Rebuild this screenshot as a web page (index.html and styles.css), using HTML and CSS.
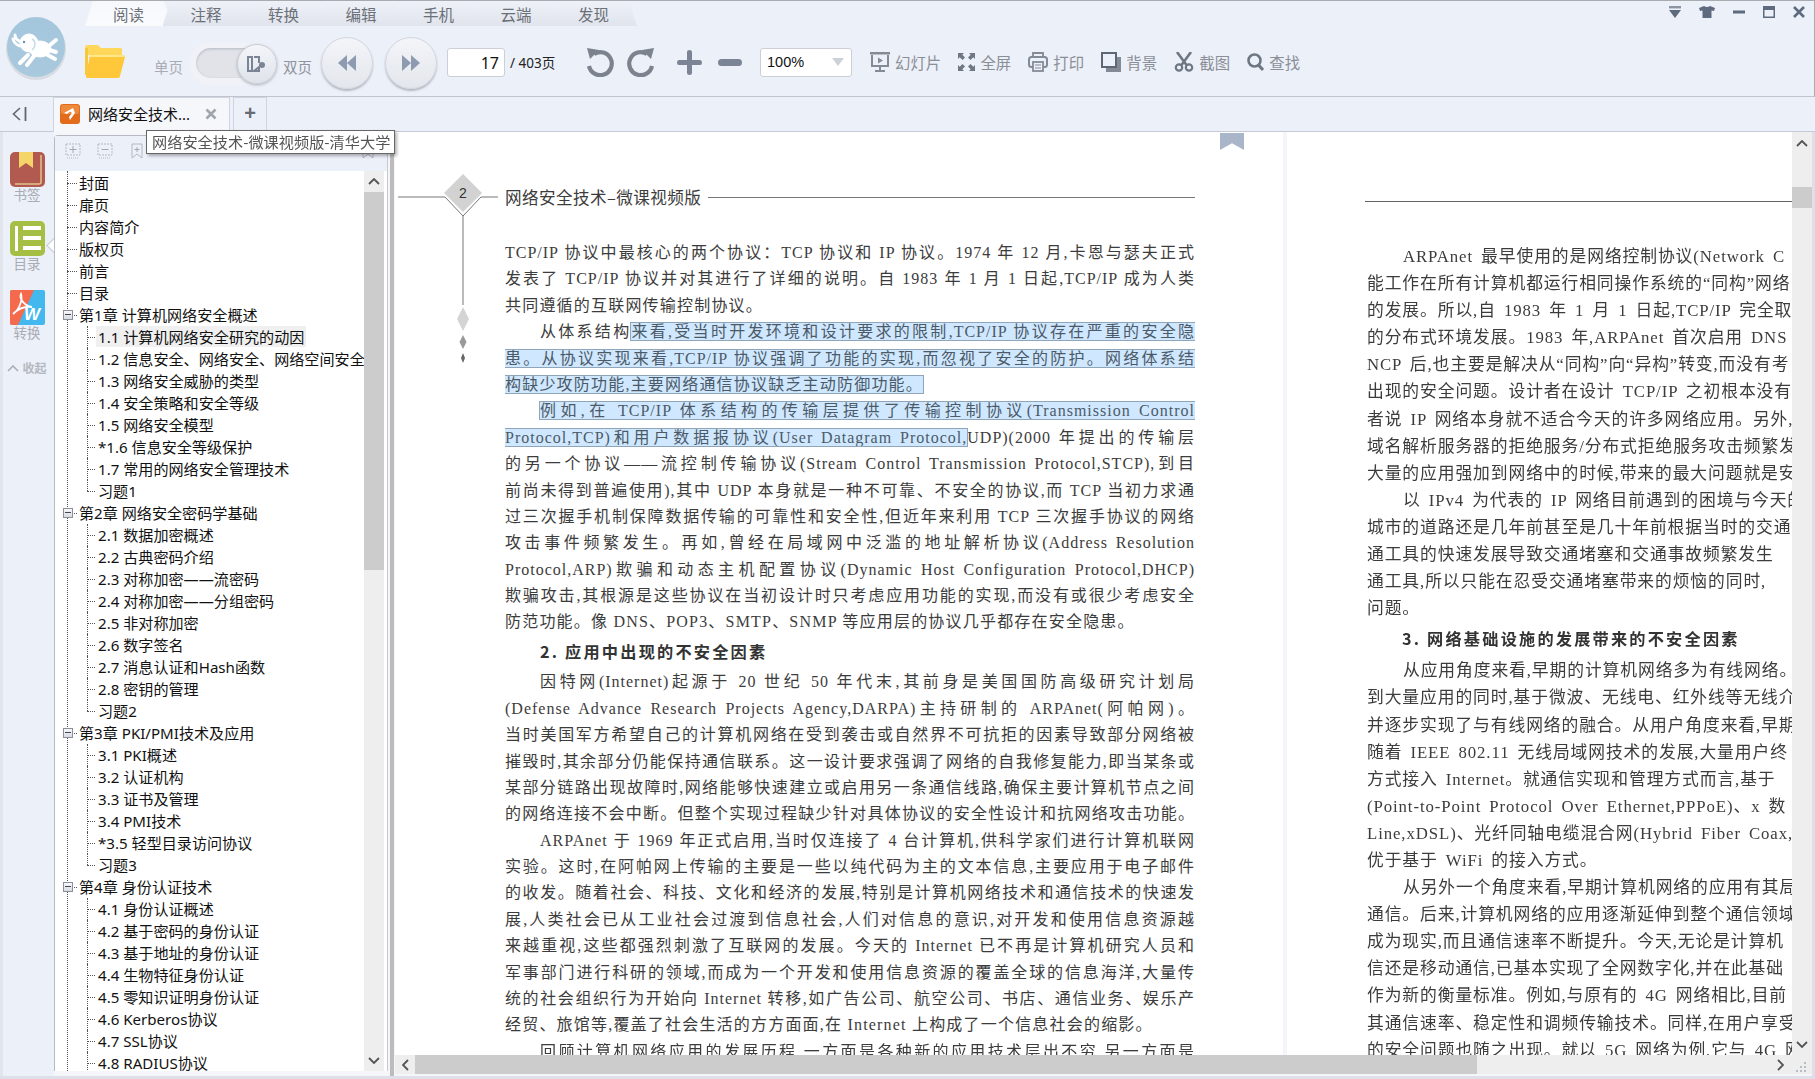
FILE: index.html
```html
<!DOCTYPE html>
<html lang="zh-CN">
<head>
<meta charset="utf-8">
<title>网络安全技术-微课视频版-清华大学</title>
<link rel="stylesheet" href="styles.css">
</head>
<body>
<div class="app">
  <header class="head">
    <div class="logo-col">
      <svg class="logo" viewBox="0 0 60 64">
        <defs><linearGradient id="lg" x1="0" y1="0" x2="0" y2="1"><stop offset="0" stop-color="#a4c6dc"/><stop offset="1" stop-color="#a9c9dd"/></linearGradient></defs>
        <ellipse cx="30" cy="32" rx="30" ry="31" fill="#c9ced6" opacity=".6"/>
        <ellipse cx="30" cy="30" rx="29" ry="30" fill="url(#lg)"/>
        <g fill="#fff" stroke="#fff" stroke-linecap="round" stroke-linejoin="round">
          <ellipse cx="34" cy="32" rx="11" ry="8"/>
          <ellipse cx="23" cy="26" rx="9" ry="9"/>
          <path d="M16 25C12 24 9 22 9 18M14 29C11 28 8 26 7 22" stroke-width="3" fill="none"/>
          <path d="M22 38L14 46M28 39L21 48M40 37L49 42M43 33L50 35M44 28L50 23" stroke-width="4" fill="none"/>
        </g>
        <circle cx="18" cy="25" r="1.2" fill="#6b8ea6"/>
        <path d="M26 22C30 24 30 30 26 33" stroke="#c7dbe8" stroke-width="1.4" fill="none"/>
      </svg>
    </div>
    <div class="head-main">
      <div class="tabs-row">
        <nav class="tabs">
          <a class="tab active">阅读</a><a class="tab">注释</a><a class="tab">转换</a><a class="tab">编辑</a><a class="tab">手机</a><a class="tab">云端</a><a class="tab">发现</a>
        </nav>
        <div class="win-ctrls">
          <svg class="wc wc-a" viewBox="0 0 12 12"><rect width="12" height="2.4" fill="#8d94a3"/><path d="M0 4H12L6 12Z" fill="#5e6a7e"/></svg>
          <svg class="wc wc-b" viewBox="0 0 16 12"><path d="M0 2L5 0Q8 2 11 0L16 2L15 5L12.500 4.500V12H3.500V4.500L1 5Z" fill="#5e6a7e"/></svg>
          <svg class="wc wc-c" viewBox="0 0 12 12"><rect y="4.500" width="12" height="3" fill="#5e6a7e"/></svg>
          <svg class="wc wc-c" viewBox="0 0 12 12"><rect width="12" height="12" fill="#5e6a7e"/><rect x="1.500" y="4" width="9" height="6.500" fill="#ecf0f8"/></svg>
          <svg class="wc wc-c" viewBox="0 0 12 12"><path d="M1 1L11 11M11 1L1 11" stroke="#5e6a7e" stroke-width="2.600"/></svg>
        </div>
      </div>
      <div class="toolbar">
        <svg class="folder" viewBox="0 0 40 33"><path d="M0 3Q0 0 3 0H13L16 3H36Q37 3 37 5V10H0Z" fill="#ffd75a"/><path d="M0 3H3V30H0Z" fill="#f8c83c"/><path d="M5 10H38Q40 10 40 12L35 31Q35 33 33 33H2Q1 33 1 31Z" fill="#ffc73a"/><path d="M5 10H38Q40 10 39.500 12H4.500Z" fill="#ffe88a"/></svg>
        <span class="lbl lbl-single">单页</span>
        <div class="toggle"><div class="toggle-track"></div>
          <div class="knob"><svg viewBox="0 0 20 18"><path d="M1 2H5V16H1ZM7 2H12V8M12 12V16H7Z" fill="none" stroke="#7b8494" stroke-width="2"/><circle cx="15" cy="10" r="3" fill="#7b8494"/></svg></div>
        </div>
        <span class="lbl lbl-double">双页</span>
        <button class="round-btn rb-prev"><svg viewBox="0 0 20 18"><path d="M10 1V17L1 9ZM19 1V17L10 9Z" fill="#8d9ab0"/></svg></button>
        <button class="round-btn rb-next"><svg viewBox="0 0 20 18"><path d="M1 1V17L10 9ZM10 1V17L19 9Z" fill="#8d9ab0"/></svg></button>
        <div class="page-input">17</div>
        <span class="page-total">/ 403页</span>
        <svg class="rot rot-undo" viewBox="0 0 30 30"><path d="M9 7A11.500 11.500 0 1 1 4 19" fill="none" stroke="#7c838e" stroke-width="4.200"/><path d="M2 1L14 3L5 12Z" fill="#7c838e"/></svg>
        <svg class="rot rot-redo" viewBox="0 0 30 30"><path d="M21 7A11.500 11.500 0 1 0 26 19" fill="none" stroke="#7c838e" stroke-width="4.200"/><path d="M28 1L16 3L25 12Z" fill="#7c838e"/></svg>
        <svg class="zoom-plus" viewBox="0 0 25 25"><path d="M10 2Q10 0 12.500 0T15 2V10H23Q25 10 25 12.500T23 15H15V23Q15 25 12.500 25T10 23V15H2Q0 15 0 12.500T2 10H10Z" fill="#7a8494"/></svg>
        <div class="zoom-minus"></div>
        <div class="zoom-select"><span>100%</span><i class="caret"></i></div>
        <div class="tools">
          <div class="tool"><svg class="ti" viewBox="0 0 20 20"><rect width="20" height="2.500" fill="#848a96"/><path d="M2 3V14H18V3" fill="none" stroke="#848a96" stroke-width="2"/><path d="M8 5.500L13 8.500L8 11.500Z" fill="#848a96"/><rect x="9" y="14" width="2" height="4" fill="#848a96"/><rect x="5" y="18" width="10" height="2" fill="#848a96"/></svg><span>幻灯片</span></div>
          <div class="tool"><svg class="ti ti-s" viewBox="0 0 17 18"><path d="M0 0H6L4.300 1.700L7 4.500L4.500 7L1.700 4.300L0 6ZM17 0V6L15.300 4.300L12.500 7L10 4.500L12.700 1.700L11 0ZM0 18V12L1.700 13.700L4.500 11L7 13.500L4.300 16.300L6 18ZM17 18H11L12.700 16.300L10 13.500L12.500 11L15.300 13.700L17 12Z" fill="#6f7684"/></svg><span>全屏</span></div>
          <div class="tool"><svg class="ti" viewBox="0 0 20 20"><path d="M5 5V1H15V5" fill="none" stroke="#848a96" stroke-width="1.800"/><rect x="1" y="5" width="18" height="10" rx="2.500" fill="none" stroke="#848a96" stroke-width="2"/><rect x="5" y="10" width="10" height="9" fill="#ecf0f8" stroke="#848a96" stroke-width="1.800"/><path d="M7 13H13M7 16H13" stroke="#848a96" stroke-width="1.200"/></svg><span>打印</span></div>
          <div class="tool"><svg class="ti" viewBox="0 0 20 20"><rect x="5" y="5" width="15" height="15" fill="#848a96"/><rect x="1" y="1" width="14" height="14" fill="#ecf0f8" stroke="#5f6674" stroke-width="2"/></svg><span>背景</span></div>
          <div class="tool"><svg class="ti" viewBox="0 0 20 20"><path d="M3 0L12.500 13M17 0L7.500 13" stroke="#6f7684" stroke-width="2.600"/><circle cx="5" cy="15.500" r="3.200" fill="none" stroke="#6f7684" stroke-width="2.200"/><circle cx="15" cy="15.500" r="3.200" fill="none" stroke="#6f7684" stroke-width="2.200"/></svg><span>截图</span></div>
          <div class="tool"><svg class="ti ti-s" viewBox="0 0 17 18"><circle cx="7.500" cy="7.500" r="6" fill="none" stroke="#6f7684" stroke-width="2.600"/><path d="M11.500 12L16 17" stroke="#6f7684" stroke-width="3"/></svg><span>查找</span></div>
        </div>
      </div>
    </div>
  </header>

  <div class="tabbar">
    <svg class="collapse" viewBox="0 0 15 14"><path d="M8 1L1.500 7L8 13" fill="none" stroke="#5e6673" stroke-width="1.600"/><path d="M13.500 0V14" stroke="#5e6673" stroke-width="1.800"/></svg>
    <div class="doc-tab">
      <svg class="doc-ico" viewBox="0 0 20 20"><rect width="20" height="20" rx="3" fill="#e36c1c"/><rect x="1" y="1" width="18" height="9" rx="2" fill="#ee8a3c"/><path d="M4 9L13 4L15 9L10 16L9 13L12 9L10 7.500L7 10Z" fill="#fff"/></svg>
      <span class="doc-name">网络安全技术...</span>
      <svg class="doc-x" viewBox="0 0 12 12"><path d="M1.500 1.500L10.500 10.500M10.500 1.500L1.500 10.500" stroke="#a0a4ac" stroke-width="2.600"/></svg>
    </div>
    <div class="tab-add">+</div>
    <div class="tooltip">网络安全技术-微课视频版-清华大学</div>
  </div>

  <main class="main">
    <aside class="rail">
      <div class="rail-item">
        <svg class="rail-ico" viewBox="0 0 35 35"><rect width="35" height="35" rx="5" fill="#b35a50"/><path d="M31 3V30Q31 32 29 32H5" fill="none" stroke="#e4c18c" stroke-width="1.500"/><path d="M9 0H23V16L16 11L9 16Z" fill="#f5d46a"/></svg>
        <span>书签</span>
      </div>
      <div class="rail-item current">
        <svg class="rail-ico" viewBox="0 0 35 35"><rect width="35" height="35" rx="5" fill="#a5bf45"/><path d="M5 5H8V30H5ZM13 5H31V9H13ZM13 15H31V19H13ZM13 25H31V29H13Z" fill="#fff"/></svg>
        <span>目录</span>
      </div>
      <div class="rail-item">
        <svg class="rail-ico" viewBox="0 0 35 35"><rect width="35" height="35" rx="2" fill="#43b8ee"/><path d="M0 2Q0 0 2 0H24L8 35H2Q0 35 0 33Z" fill="#f56a4c"/><path d="M3 24C9 20 13 10 11 4C9 8 14 16 22 17C15 16 8 19 3 24Z" fill="none" stroke="#fff" stroke-width="1.800"/><text class="rail-w" x="22" y="30">W</text></svg>
        <span>转换</span>
      </div>
      <div class="rail-fold"><svg viewBox="0 0 12 7"><path d="M1 6L6 1L11 6" fill="none" stroke="#a8acb4" stroke-width="1.500"/></svg><span>收起</span></div>
    </aside>

    <section class="panel">
      <div class="panel-tools">
        <svg class="pt" viewBox="0 0 16 16"><rect x="1" y="1" width="14" height="11" fill="none" stroke="#b4b8c2" stroke-dasharray="2 1"/><path d="M8 3V10M4.500 6.500H11.500" stroke="#a4a8b2"/><path d="M2 15H14" stroke="#b4b8c2" stroke-dasharray="1 1"/></svg>
        <svg class="pt" viewBox="0 0 16 16"><rect x="1" y="1" width="14" height="11" fill="none" stroke="#b4b8c2" stroke-dasharray="2 1"/><path d="M4.500 6.500H11.500" stroke="#a4a8b2"/><path d="M2 15H14" stroke="#b4b8c2" stroke-dasharray="1 1"/></svg>
        <svg class="pt" viewBox="0 0 16 16"><path d="M3 1H13V15L8 11L3 15Z" fill="none" stroke="#b4b8c2"/><path d="M8 4V9M5.500 6.500H10.500" stroke="#a4a8b2"/></svg>
        <span class="pt-spacer"></span>
        <svg class="pt pt-end" viewBox="0 0 16 16"><path d="M3 1H13V15L8 11L3 15Z" fill="none" stroke="#b4b8c2"/></svg>
      </div>
      <div class="panel-body">
        <ul class="tree">
          <li class="top"><span>封面</span></li>
          <li class="top"><span>扉页</span></li>
          <li class="top"><span>内容简介</span></li>
          <li class="top"><span>版权页</span></li>
          <li class="top"><span>前言</span></li>
          <li class="top"><span>目录</span></li>
          <li class="top chap"><i class="expander"></i><span>第1章 计算机网络安全概述</span></li>
          <li class="sub sel"><span>1.1 计算机网络安全研究的动因</span></li>
          <li class="sub"><span>1.2 信息安全、网络安全、网络空间安全</span></li>
          <li class="sub"><span>1.3 网络安全威胁的类型</span></li>
          <li class="sub"><span>1.4 安全策略和安全等级</span></li>
          <li class="sub"><span>1.5 网络安全模型</span></li>
          <li class="sub"><span>*1.6 信息安全等级保护</span></li>
          <li class="sub"><span>1.7 常用的网络安全管理技术</span></li>
          <li class="sub last"><span>习题1</span></li>
          <li class="top chap"><i class="expander"></i><span>第2章 网络安全密码学基础</span></li>
          <li class="sub"><span>2.1 数据加密概述</span></li>
          <li class="sub"><span>2.2 古典密码介绍</span></li>
          <li class="sub"><span>2.3 对称加密——流密码</span></li>
          <li class="sub"><span>2.4 对称加密——分组密码</span></li>
          <li class="sub"><span>2.5 非对称加密</span></li>
          <li class="sub"><span>2.6 数字签名</span></li>
          <li class="sub"><span>2.7 消息认证和Hash函数</span></li>
          <li class="sub"><span>2.8 密钥的管理</span></li>
          <li class="sub last"><span>习题2</span></li>
          <li class="top chap"><i class="expander"></i><span>第3章 PKI/PMI技术及应用</span></li>
          <li class="sub"><span>3.1 PKI概述</span></li>
          <li class="sub"><span>3.2 认证机构</span></li>
          <li class="sub"><span>3.3 证书及管理</span></li>
          <li class="sub"><span>3.4 PMI技术</span></li>
          <li class="sub"><span>*3.5 轻型目录访问协议</span></li>
          <li class="sub last"><span>习题3</span></li>
          <li class="top chap"><i class="expander"></i><span>第4章 身份认证技术</span></li>
          <li class="sub"><span>4.1 身份认证概述</span></li>
          <li class="sub"><span>4.2 基于密码的身份认证</span></li>
          <li class="sub"><span>4.3 基于地址的身份认证</span></li>
          <li class="sub"><span>4.4 生物特征身份认证</span></li>
          <li class="sub"><span>4.5 零知识证明身份认证</span></li>
          <li class="sub"><span>4.6 Kerberos协议</span></li>
          <li class="sub"><span>4.7 SSL协议</span></li>
          <li class="sub"><span>4.8 RADIUS协议</span></li>
        </ul>
        <div class="vbar vbar-tree">
          <div class="vb-btn"><svg viewBox="0 0 12 7"><path d="M1 6L6 1L11 6" fill="none" stroke="#555" stroke-width="1.800"/></svg></div>
          <div class="vb-thumb"></div>
          <div class="vb-rest"></div>
          <div class="vb-btn"><svg viewBox="0 0 12 7"><path d="M1 1L6 6L11 1" fill="none" stroke="#555" stroke-width="1.800"/></svg></div>
        </div>
      </div>
    </section>
    <div class="splitter"></div>

    <section class="viewer">
      <div class="viewer-top">
        <div class="pages">
          <article class="page page-left">
            <svg class="ornament" viewBox="0 0 120 240">
              <path d="M3 65H50L68 84L86 65H103M68 84V173" fill="none" stroke="#777" stroke-width="1"/>
              <path d="M68 42L87 61L68 80L49 61Z" fill="#d2d2d2"/>
              <text class="orn-num" x="68" y="66">2</text>
              <path d="M68 175L74 187L68 199Z M68 175L62 187L68 199Z" fill="#d4d4d4"/>
              <path d="M68 203L71.500 210L68 217L64.500 210Z" fill="#999"/>
              <path d="M68 221L70 226L68 231L66 226Z" fill="#666"/>
            </svg>
            <i class="ribbon"></i>
            <div class="chap-head"><span>网络安全技术–微课视频版</span><i class="chap-rule"></i></div>
            <div class="body-text">
              <p>TCP/IP 协议中最核心的两个协议：TCP 协议和 IP 协议。1974 年 12 月,卡恩与瑟夫正式</p>
              <p>发表了 TCP/IP 协议并对其进行了详细的说明。自 1983 年 1 月 1 日起,TCP/IP 成为人类</p>
              <p class="end">共同遵循的互联网传输控制协议。</p>
              <p class="ind">从体系结构<span class="hl">来看,受当时开发环境和设计要求的限制,TCP/IP 协议存在严重的安全隐</span></p>
              <p><span class="hl">患。从协议实现来看,TCP/IP 协议强调了功能的实现,而忽视了安全的防护。网络体系结</span></p>
              <p class="end"><span class="hl">构缺少攻防功能,主要网络通信协议缺乏主动防御功能。</span></p>
              <p class="ind"><span class="hl">例如,在 TCP/IP 体系结构的传输层提供了传输控制协议(Transmission Control</span></p>
              <p><span class="hl">Protocol,TCP)和用户数据报协议(User Datagram Protocol,</span>UDP)(2000 年提出的传输层</p>
              <p>的另一个协议——流控制传输协议(Stream Control Transmission Protocol,STCP),到目</p>
              <p>前尚未得到普遍使用),其中 UDP 本身就是一种不可靠、不安全的协议,而 TCP 当初力求通</p>
              <p>过三次握手机制保障数据传输的可靠性和安全性,但近年来利用 TCP 三次握手协议的网络</p>
              <p>攻击事件频繁发生。再如,曾经在局域网中泛滥的地址解析协议(Address Resolution</p>
              <p>Protocol,ARP)欺骗和动态主机配置协议(Dynamic Host Configuration Protocol,DHCP)</p>
              <p>欺骗攻击,其根源是这些协议在当初设计时只考虑应用功能的实现,而没有或很少考虑安全</p>
              <p class="end">防范功能。像 DNS、POP3、SMTP、SNMP 等应用层的协议几乎都存在安全隐患。</p>
              <h3 class="sec">2. 应用中出现的不安全因素</h3>
              <p class="ind">因特网(Internet)起源于 20 世纪 50 年代末,其前身是美国国防高级研究计划局</p>
              <p>(Defense Advance Research Projects Agency,DARPA)主持研制的 ARPAnet(阿帕网)。</p>
              <p>当时美国军方希望自己的计算机网络在受到袭击或自然界不可抗拒的因素导致部分网络被</p>
              <p>摧毁时,其余部分仍能保持通信联系。这一设计要求强调了网络的自我修复能力,即当某条或</p>
              <p>某部分链路出现故障时,网络能够快速建立或启用另一条通信线路,确保主要计算机节点之间</p>
              <p>的网络连接不会中断。但整个实现过程缺少针对具体协议的安全性设计和抗网络攻击功能。</p>
              <p class="ind">ARPAnet 于 1969 年正式启用,当时仅连接了 4 台计算机,供科学家们进行计算机联网</p>
              <p>实验。这时,在阿帕网上传输的主要是一些以纯代码为主的文本信息,主要应用于电子邮件</p>
              <p>的收发。随着社会、科技、文化和经济的发展,特别是计算机网络技术和通信技术的快速发</p>
              <p>展,人类社会已从工业社会过渡到信息社会,人们对信息的意识,对开发和使用信息资源越</p>
              <p>来越重视,这些都强烈刺激了互联网的发展。今天的 Internet 已不再是计算机研究人员和</p>
              <p>军事部门进行科研的领域,而成为一个开发和使用信息资源的覆盖全球的信息海洋,大量传</p>
              <p>统的社会组织行为开始向 Internet 转移,如广告公司、航空公司、书店、通信业务、娱乐产业、</p>
              <p class="end">经贸、旅馆等,覆盖了社会生活的方方面面,在 Internet 上构成了一个信息社会的缩影。</p>
              <p class="ind">回顾计算机网络应用的发展历程,一方面是各种新的应用技术层出不穷,另一方面是</p>
            </div>
          </article>
          <article class="page page-right">
            <div class="rule"></div>
            <div class="body-right">
              <p class="ind">ARPAnet 最早使用的是网络控制协议(Network C</p>
              <p>能工作在所有计算机都运行相同操作系统的“同构”网络</p>
              <p>的发展。所以,自 1983 年 1 月 1 日起,TCP/IP 完全取</p>
              <p>的分布式环境发展。1983 年,ARPAnet 首次启用 DNS</p>
              <p>NCP 后,也主要是解决从“同构”向“异构”转变,而没有考</p>
              <p>出现的安全问题。设计者在设计 TCP/IP 之初根本没有</p>
              <p>者说 IP 网络本身就不适合今天的许多网络应用。另外,</p>
              <p>域名解析服务器的拒绝服务/分布式拒绝服务攻击频繁发</p>
              <p>大量的应用强加到网络中的时候,带来的最大问题就是安</p>
              <p class="ind">以 IPv4 为代表的 IP 网络目前遇到的困境与今天的</p>
              <p>城市的道路还是几年前甚至是几十年前根据当时的交通</p>
              <p>通工具的快速发展导致交通堵塞和交通事故频繁发生</p>
              <p>通工具,所以只能在忍受交通堵塞带来的烦恼的同时,</p>
              <p>问题。</p>
              <h3 class="sec">3. 网络基础设施的发展带来的不安全因素</h3>
              <p class="ind">从应用角度来看,早期的计算机网络多为有线网络。</p>
              <p>到大量应用的同时,基于微波、无线电、红外线等无线介质</p>
              <p>并逐步实现了与有线网络的融合。从用户角度来看,早期</p>
              <p>随着 IEEE 802.11 无线局域网技术的发展,大量用户终</p>
              <p>方式接入 Internet。就通信实现和管理方式而言,基于</p>
              <p>(Point-to-Point Protocol Over Ethernet,PPPoE)、x 数</p>
              <p>Line,xDSL)、光纤同轴电缆混合网(Hybrid Fiber Coax,</p>
              <p>优于基于 WiFi 的接入方式。</p>
              <p class="ind">从另外一个角度来看,早期计算机网络的应用有其局</p>
              <p>通信。后来,计算机网络的应用逐渐延伸到整个通信领域</p>
              <p>成为现实,而且通信速率不断提升。今天,无论是计算机</p>
              <p>信还是移动通信,已基本实现了全网数字化,并在此基础</p>
              <p>作为新的衡量标准。例如,与原有的 4G 网络相比,目前</p>
              <p>其通信速率、稳定性和调频传输技术。同样,在用户享受</p>
              <p>的安全问题也随之出现。就以 5G 网络为例,它与 4G 网</p>
            </div>
          </article>
        </div>
        <div class="vbar vbar-doc">
          <div class="vb-btn vb-tall"><svg viewBox="0 0 12 7"><path d="M1 6L6 1L11 6" fill="none" stroke="#555" stroke-width="1.800"/></svg></div>
          <div class="vb-thumb"></div>
          <div class="vb-rest"></div>
          <div class="vb-btn"><svg viewBox="0 0 12 7"><path d="M1 1L6 6L11 1" fill="none" stroke="#555" stroke-width="1.800"/></svg></div>
        </div>
      </div>
      <div class="hbar">
        <div class="hb-btn"><svg viewBox="0 0 7 12"><path d="M6 1L1 6L6 11" fill="none" stroke="#555" stroke-width="1.800"/></svg></div>
        <div class="hb-thumb"></div>
        <div class="hb-rest"></div>
        <div class="hb-btn"><svg viewBox="0 0 7 12"><path d="M1 1L6 6L1 11" fill="none" stroke="#555" stroke-width="1.800"/></svg></div>
        <div class="grip"><svg viewBox="0 0 12 12"><path d="M9 1h2v2H9zM5 5h2v2H5zM9 5h2v2H9zM1 9h2v2H1zM5 9h2v2H5zM9 9h2v2H9z" fill="#b8bcc4"/></svg></div>
      </div>
    </section>
    <div class="edge"></div>
  </main>
</div>
</body>
</html>
```

FILE: styles.css
```css
* { box-sizing: border-box; }
html, body { margin: 0; padding: 0; }
body {
  width: 1815px; height: 1079px; overflow: hidden; background: #ecf0f8;
  font-family: "Noto Sans", "Noto Sans CJK SC", sans-serif; color: #111;
}
ul { list-style: none; margin: 0; padding: 0; }
.app { display: flex; flex-direction: column; height: 1079px; position: relative; }

/* header */
.head { display: flex; height: 97px; flex: none; border-top: 1px solid #a8acb0; border-bottom: 1px solid #c0c4cc; border-right: 1px solid #a8acb0; background: #ecf0f8; }
.logo-col { width: 85px; flex: none; padding: 16px 0 0 6px; }
.logo { width: 60px; height: 64px; display: block; }
.head-main { flex: 1; display: flex; flex-direction: column; min-width: 0; }
.tabs-row { display: flex; justify-content: space-between; height: 25px; flex: none; }
.tabs { display: flex; }
.tab {
  width: 87px; margin-right: -9.5px; height: 25px; display: flex; align-items: center; justify-content: center;
  padding-top: 2px; font-size: 15.5px; color: #6c7078; clip-path: polygon(0 100%, 9% 0, 91% 0, 100% 100%);
  background: linear-gradient(#eef1f8, #e0e4ec);
}
.tab.active { background: linear-gradient(#f6f8fc, #fafbfd); }
.win-ctrls { display: flex; gap: 18px; padding: 5px 9px 0 0; align-items: flex-start; }
.wc { display: block; height: 12px; }
.wc-a { width: 12px; }
.wc-b { width: 16px; }
.wc-c { width: 12px; }

.toolbar { display: flex; align-items: center; margin-top: 3px; height: 66px; flex: none; }
.folder { width: 40px; height: 33px; flex: none; margin-top: -2px; }
.lbl { font-size: 14.5px; color: #a8acb4; white-space: nowrap; }
.lbl-single { margin: 8px 0 0 29px; }
.toggle { position: relative; width: 87px; height: 42px; margin: 3px 0 0 7px; flex: none; background: #f0f2f8; border-radius: 21px; }
.toggle-track { margin: 5px 0 0 6px; width: 66px; height: 30px; border-radius: 15px; background: #e1e3e9; box-shadow: inset 0 1px 3px #b4b8c0; }
.knob { position: absolute; right: 0; top: 1px; width: 40px; height: 40px; border-radius: 50%; background: linear-gradient(#f3f5f9, #dfe3ea); border: 1px solid #c9cdd5; box-shadow: 0 1px 3px #a8acb4; display: flex; align-items: center; justify-content: center; }
.knob svg { width: 20px; height: 18px; }
.lbl-double { margin: 8px 0 0 6px; color: #8f939c; }
.round-btn { width: 52px; height: 52px; border-radius: 50%; flex: none; padding: 0; border: 1px solid #d2d6de; background: linear-gradient(#f3f5f9, #e3e6ec); box-shadow: 0 2px 2px #b4b8c0; display: flex; align-items: center; justify-content: center; margin-top: 1px; }
.round-btn svg { width: 20px; height: 18px; }
.rb-prev { margin-left: 9px; }
.rb-next { margin-left: 12px; }
.page-input { width: 58px; height: 29px; margin-left: 10px; flex: none; background: #fff; border: 1px solid #ccd0d6; border-radius: 3px; text-align: right; padding-right: 5px; font-size: 16px; line-height: 29px; color: #111; }
.page-total { margin-left: 5px; width: 49px; font-size: 13.5px; white-space: nowrap; color: #222; }
.rot { width: 30px; height: 30px; flex: none; }
.rot-undo { margin-left: 26px; }
.rot-redo { margin-left: 11px; }
.zoom-plus { width: 25px; height: 25px; margin-left: 21px; flex: none; }
.zoom-minus { width: 24px; height: 7px; margin-left: 16px; border-radius: 3.5px; background: #7a8494; flex: none; }
.zoom-select { width: 92px; height: 29px; margin-left: 18px; flex: none; background: #fff; border: 1px solid #ccd0d6; border-radius: 3px; display: flex; align-items: center; justify-content: space-between; padding: 0 7px 0 6px; font-size: 14.5px; font-family: "Liberation Sans", sans-serif; color: #111; }
.caret { width: 0; height: 0; border: 6px solid transparent; border-top: 8px solid #cdd1d8; border-bottom: 0; }
.tools { display: flex; align-items: center; gap: 17.2px; margin-left: 18px; }
.tool { display: flex; align-items: center; gap: 5px; font-size: 15.4px; color: #8a8e97; white-space: nowrap; }
.ti { width: 20px; height: 20px; display: block; flex: none; }
.ti-s { width: 17px; height: 18px; }

/* tab bar */
.tabbar { display: flex; height: 35px; flex: none; border-bottom: 1px solid #c4cad8; position: relative; background: #ecf0f8; }
.collapse { width: 15px; height: 14px; margin: 10px 0 0 12px; flex: none; }
.doc-tab { width: 177px; margin-left: 26px; height: 35px; flex: none; display: flex; align-items: center; padding-left: 6px; background: #f5f7fb; border: 1px solid #cfd4e0; border-bottom: 0; }
.doc-ico { width: 20px; height: 20px; flex: none; margin-top: -3px; }
.doc-name { font-size: 15px; margin: -3px 0 0 8px; width: 109px; white-space: nowrap; color: #111; }
.doc-x { width: 12px; height: 12px; margin: -2px 0 0 8px; flex: none; }
.tab-add { width: 34px; height: 34px; margin-left: 3px; flex: none; border: 1px solid #cfd4e0; border-bottom: 0; text-align: center; font-size: 20px; line-height: 30px; font-weight: 700; color: #666b75; font-family: "Liberation Sans", sans-serif; }
.tooltip { position: absolute; left: 146px; top: 33px; width: 249px; height: 24px; z-index: 5; background: #fff; border: 1px solid #666; box-shadow: 2px 2px 3px rgba(0,0,0,.3); font-size: 15.2px; line-height: 20px; color: #555; white-space: nowrap; padding-left: 5px; font-family: "Noto Sans CJK SC", sans-serif; }

/* main */
.main { flex: 1; display: flex; min-height: 0; background: #f4f6fa; border-bottom: 3px solid #dde0e8; }
.rail { width: 54px; flex: none; background: #ecf0f8; padding-top: 20px; display: flex; flex-direction: column; align-items: center; margin-bottom: 0; border-left: 3px solid #e2e5ec; }
.rail-item { position: relative; display: flex; flex-direction: column; align-items: center; margin-bottom: 16px; margin-left: -3px; }
.rail-ico { width: 35px; height: 35px; display: block; }
.rail-w { font: italic 700 17px "Liberation Sans", sans-serif; fill: #fff; text-anchor: middle; }
.rail-item span { font-size: 13.5px; line-height: 16px; height: 18px; color: #a8acb4; }
.rail-item.current::after { content: ""; position: absolute; left: 39px; top: 18px; width: 12px; height: 12px; background: #fff; transform: rotate(45deg); border-left: 1px solid #c4c8d0; border-bottom: 1px solid #c4c8d0; }
.rail-fold { display: flex; align-items: center; gap: 3px; font-size: 12px; font-weight: 700; color: #b4b8c0; height: 18px; margin-left: -3px; }
.rail-fold svg { width: 12px; height: 7px; }

.panel { width: 334px; flex: none; margin: 3px 0 5px; border-left: 1px solid #b5bac4; border-top: 1px solid #b5bac4; border-right: 1px solid #c4c8d0; border-top-left-radius: 4px; display: flex; flex-direction: column; background: #f4f6fa; position: relative; }
.panel-tools { height: 35px; flex: none; display: flex; align-items: center; padding: 0 0 5px 10px; gap: 16px; background: #ecf0f8; }
.pt { width: 16px; height: 16px; flex: none; }
.pt-spacer { flex: 1; }
.pt-end { margin-right: 11px; }
.panel-body { flex: 1; min-height: 0; display: flex; background: #fff; padding-right: 4px; }
.tree { width: 309px; flex: none; position: relative; overflow: hidden; padding-top: 1px; font-size: 15.1px; }
.tree::before { content: ""; position: absolute; left: 12px; top: 0; bottom: 0; border-left: 1px dotted #555; }
.tree li { height: 22px; line-height: 22px; white-space: nowrap; position: relative; }
.tree li::before { content: ""; position: absolute; top: 11px; border-top: 1px dotted #555; }
.top { padding-left: 22px; }
.top::before { left: 12px; width: 10px; }
.sub { padding-left: 41px; }
.sub::before { left: 32px; width: 8px; }
.sub::after { content: ""; position: absolute; left: 32px; top: 0; height: 22px; border-left: 1px dotted #555; }
.sub.last::after { height: 11px; }
.tree li span { padding: 0 2px; display: inline-block; height: 21px; position: relative; }
.sub.sel span { background: #f0f0f0; padding-right: 2px; }
.expander { position: absolute; left: 8px; top: 6px; width: 10px; height: 10px; z-index: 1; background: linear-gradient(#f8f8fa, #d8dbe2); border: 1px solid #8a8f99; }
.expander::after { content: ""; position: absolute; left: 1px; right: 1px; top: 3px; height: 1px; background: #445; }

/* scrollbars */
.vbar { display: flex; flex-direction: column; width: 20px; flex: none; background: #eee; }
.vb-btn { height: 21px; flex: none; display: flex; align-items: center; justify-content: center; background: #eee; }
.vb-btn svg { width: 12px; height: 7px; }
.vbar-tree .vb-thumb { height: 378px; background: #ccc; flex: none; }
.vb-rest { flex: 1; }
.vbar-doc .vb-thumb { height: 21px; background: #ccc; flex: none; }
.vb-tall { height: 55px; align-items: flex-start; padding-top: 8px; }
.hbar { display: flex; height: 19px; flex: none; background: #eee; }
.hb-btn { width: 20px; flex: none; display: flex; align-items: center; justify-content: center; }
.hb-btn svg { width: 7px; height: 12px; }
.hb-thumb { width: 1062px; flex: none; background: #ccc; }
.hb-rest { flex: 1; }
.grip { width: 22px; flex: none; display: flex; align-items: flex-end; justify-content: center; padding-bottom: 1px; }
.grip svg { width: 12px; height: 12px; }

.splitter { width: 4px; margin: 0 1px 0 2px; flex: none; background: #bcbcbc; }
.viewer { flex: 1; min-width: 0; display: flex; flex-direction: column; margin-bottom: 2px; }
.viewer-top { flex: 1; min-height: 0; display: flex; }
.pages { flex: 1; min-width: 0; display: flex; overflow: hidden; background: #f3f5fa; }
.edge { width: 3px; flex: none; background: #dde0e8; }

/* pages */
.page { background: #fff; flex: none; position: relative; color: #3c3c3c; font-family: "Liberation Serif", "Noto Sans CJK SC", serif; filter: blur(.3px); }
.page-left { width: 888px; margin-right: 4px; padding: 52px 0 0 110px; }
.ornament { position: absolute; left: 0; top: 0; width: 120px; height: 240px; }
.orn-num { font: 14px "Liberation Sans", sans-serif; text-anchor: middle; fill: #333; }
.ribbon { position: absolute; left: 825px; top: 1px; width: 24px; height: 17px; background: #a9b5c9; clip-path: polygon(0 0, 100% 0, 100% 100%, 50% 60%, 0 100%); }
.chap-head { width: 690px; height: 26px; display: flex; align-items: center; font-size: 16.6px; letter-spacing: .4px; font-family: "Noto Sans CJK SC", sans-serif; margin-bottom: 30px; }
.chap-rule { flex: 1; height: 1px; background: #777; margin-left: 7px; margin-top: 1px; }
.body-text { width: 690px; }
.body-text p { margin: 0; height: 26.4px; line-height: 26.4px; font-size: 16px; letter-spacing: 1px; overflow: hidden; text-align: justify; text-align-last: justify; }
.body-text p.end { text-align-last: left; letter-spacing: 1.2px; }
.body-text p.ind { padding-left: 35px; }
.hl { background: #cfe8ff; outline: 1px solid #8fa6ba; color: #4c5a68; }
.sec { margin: 2px 0 5.5px; height: 26px; line-height: 26px; font-size: 16.2px; letter-spacing: 2.2px; font-weight: 700; padding-left: 35px; font-family: "Noto Sans CJK SC", sans-serif; color: #333; white-space: nowrap; }
.page-right { width: 800px; padding: 69px 0 0 80px; }
.rule { width: 430px; height: 1px; background: #666; margin-left: -2px; }
.body-right { margin-top: 41px; white-space: nowrap; }
.body-right p { margin: 0; height: 27.1px; line-height: 27.1px; font-size: 16.8px; letter-spacing: .9px; word-spacing: 3px; }
.body-right p.ind { padding-left: 36px; }
.body-right .sec { margin: 3px 0 6px; }
```
